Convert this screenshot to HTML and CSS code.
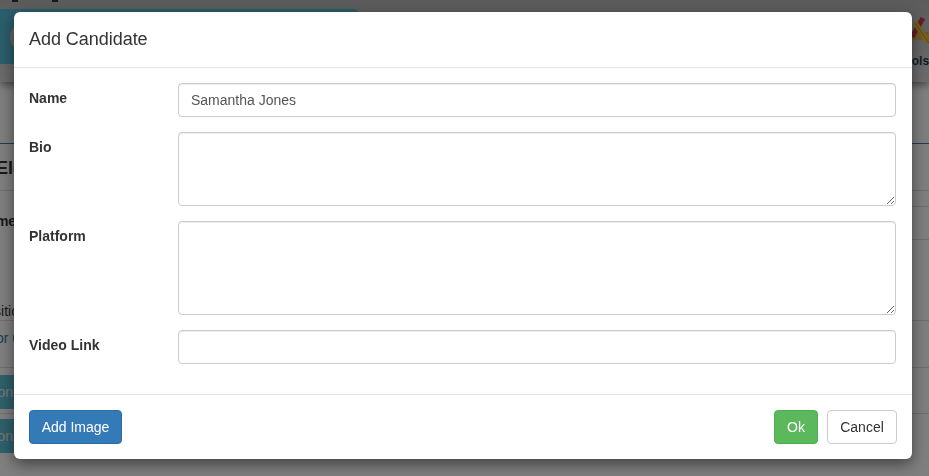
FILE: index.html
```html
<!DOCTYPE html>
<html lang="en">
<head>
<meta charset="utf-8">
<title>Add Candidate</title>
<link rel="stylesheet" href="styles.css">
</head>
<body>
<div class="page">
  <header class="navbar">
    <span class="mark mark-a"></span><span class="mark mark-b"></span>
    <div class="hero"><span class="avatar"></span></div>
    <div class="tools">
      <svg class="tools-icon" width="36" height="36" viewBox="0 0 36 36" aria-hidden="true">
        <rect x="0" y="18" width="36" height="8" fill="#dcb45a"/>
        <path d="M4 19H36" stroke="#b8923e" stroke-width="1" stroke-dasharray="1 2"/>
        <path d="M18 4 L7 23" stroke="#c8404a" stroke-width="5"/>
        <path d="M10 9 L24 29" stroke="#f0c040" stroke-width="5"/>
        <path d="M10 9 L24 29" stroke="#c09020" stroke-width="1"/>
      </svg>
      <span class="tools-label">Tools</span>
    </div>
  </header>
  <section class="sec sec-head"></section>
  <section class="sec sec-title"><b class="title-clip">Election</b></section>
  <section class="sec sec-table">
    <div class="tbl-left">
      <b class="name-clip">Name</b>
      <span class="dash"></span>
      <span class="pos-clip">Position</span>
    </div>
    <div class="tbl-right">
      <div class="cell cell-a"></div>
      <div class="cell cell-b"></div>
    </div>
  </section>
  <section class="sec sec-link"><span class="link-clip">for Candidate</span></section>
  <section class="sec sec-btn"><span class="bgbtn">Add Option</span></section>
  <section class="sec-btn2"><span class="bgbtn">Add Option</span></section>
</div>
<div class="backdrop"></div>
<div class="dialog">
  <div class="dlg-header"><h4 class="dlg-title">Add Candidate</h4></div>
  <div class="dlg-body">
    <div class="field">
      <label class="field-label">Name</label>
      <input class="control" type="text" value="Samantha Jones">
    </div>
    <div class="field">
      <label class="field-label">Bio</label>
      <textarea class="control area-bio"></textarea>
    </div>
    <div class="field">
      <label class="field-label">Platform</label>
      <textarea class="control area-platform"></textarea>
    </div>
    <div class="field">
      <label class="field-label">Video Link</label>
      <input class="control" type="text">
    </div>
  </div>
  <div class="dlg-footer">
    <button class="btn btn-primary" type="button">Add Image</button>
    <div class="spacer"></div>
    <button class="btn btn-success" type="button">Ok</button>
    <button class="btn btn-default" type="button">Cancel</button>
  </div>
</div>
</body>
</html>
```
FILE: styles.css
```css
* { box-sizing: border-box; }
html, body { margin: 0; height: 100%; overflow: hidden; }
body { font-family: "Liberation Sans", Arial, sans-serif; font-size: 14px; line-height: 20px; color: #333; background: #fff; }
.page { height: 476px; overflow: hidden; }

.navbar { position: relative; height: 82px; display: flex; justify-content: space-between; background: linear-gradient(#b8b8b8, #d8d8d8); box-shadow: 0 3px 8px rgba(0,0,0,.45); }
.mark { position: absolute; top: 0; height: 2px; background: #333; }
.mark-a { left: 12px; width: 6px; }
.mark-b { left: 52px; width: 6px; }
.hero { width: 358px; height: 55px; margin-top: 9px; background: #56bcd8; border-radius: 0 4px 4px 0; display: flex; align-items: center; padding-left: 10px; }
.avatar { width: 30px; height: 30px; border-radius: 50%; background: #ccc; }
.tools { flex: none; width: 36px; margin: 14px -12px 0 0; display: flex; flex-direction: column; }
.tools-icon { display: block; }
.tools-label { font-size: 12px; line-height: 14px; margin-top: 4px; margin-left: -7px; color: #1c3a52; font-weight: bold; }

.sec { border-bottom: 1px solid #ddd; }
.sec-head { height: 62px; border-bottom-color: #4a7a9e; }
.sec-title { height: 47px; padding-top: 14px; line-height: 20px; font-size: 18px; }
.title-clip { display: block; margin-left: -4px; white-space: nowrap; }
.sec-table { height: 130px; display: flex; justify-content: space-between; }
.tbl-left { display: flex; flex-direction: column; }
.name-clip { margin: 20px 0 0 -22px; }
.dash { width: 3px; height: 1px; margin-top: 39px; background: #e0409a; }
.pos-clip { margin: 31px 0 0 -23px; }
.tbl-right { width: 40px; }
.cell { border-bottom: 1px solid #ddd; }
.cell-a { height: 16px; }
.cell-b { height: 33px; }
.sec-link { height: 47px; padding-top: 7px; }
.link-clip { display: block; margin-left: -8px; color: #337ab7; white-space: nowrap; }
.sec-btn { height: 46px; padding-top: 7px; }
.sec-btn2 { padding-top: 5px; }
.bgbtn { display: block; width: 140px; height: 34px; margin-left: -57px; padding: 7px 0 0 0; background: #5cc0d8; color: #eee; white-space: nowrap; }

.backdrop { position: fixed; inset: 0; background: rgba(0,0,0,.5); }
.dialog { position: fixed; left: 14px; top: 12px; width: 898px; height: 447px; background: #fff; border-radius: 6px; box-shadow: 0 5px 15px rgba(0,0,0,.5); display: flex; flex-direction: column; }
.dlg-header { height: 56px; padding: 15px; border-bottom: 1px solid #e5e5e5; }
.dlg-title { margin: 0; font-size: 18px; font-weight: 500; line-height: 25px; letter-spacing: -.04px; }
.dlg-body { flex: 1; padding: 15px 16px 15px 15px; display: flex; flex-direction: column; gap: 15px; }
.field { display: flex; }
.field-label { width: 149px; flex: none; padding-top: 5px; font-weight: bold; }
.control { flex: 1; display: block; height: 34px; padding: 6px 12px; font: 14px/20px "Liberation Sans", Arial, sans-serif; color: #555; background: #fff; border: 1px solid #ccc; border-radius: 4px; box-shadow: inset 0 1px 1px rgba(0,0,0,.075); outline: none; }
.area-bio { height: 74px; }
.area-platform { height: 94px; }
.dlg-footer { height: 65px; padding: 15px; border-top: 1px solid #e5e5e5; display: flex; gap: 9px; }
.spacer { flex: 1; }
.btn { height: 34px; padding: 6px 0; font: 14px/20px "Liberation Sans", Arial, sans-serif; border: 1px solid transparent; border-radius: 4px; text-align: center; }
.btn-primary { width: 93px; color: #fff; background: #337ab7; border-color: #2e6da4; }
.btn-success { width: 44px; color: #fff; background: #5cb85c; border-color: #4cae4c; }
.btn-default { width: 70px; color: #333; background: #fff; border-color: #ccc; }
```
